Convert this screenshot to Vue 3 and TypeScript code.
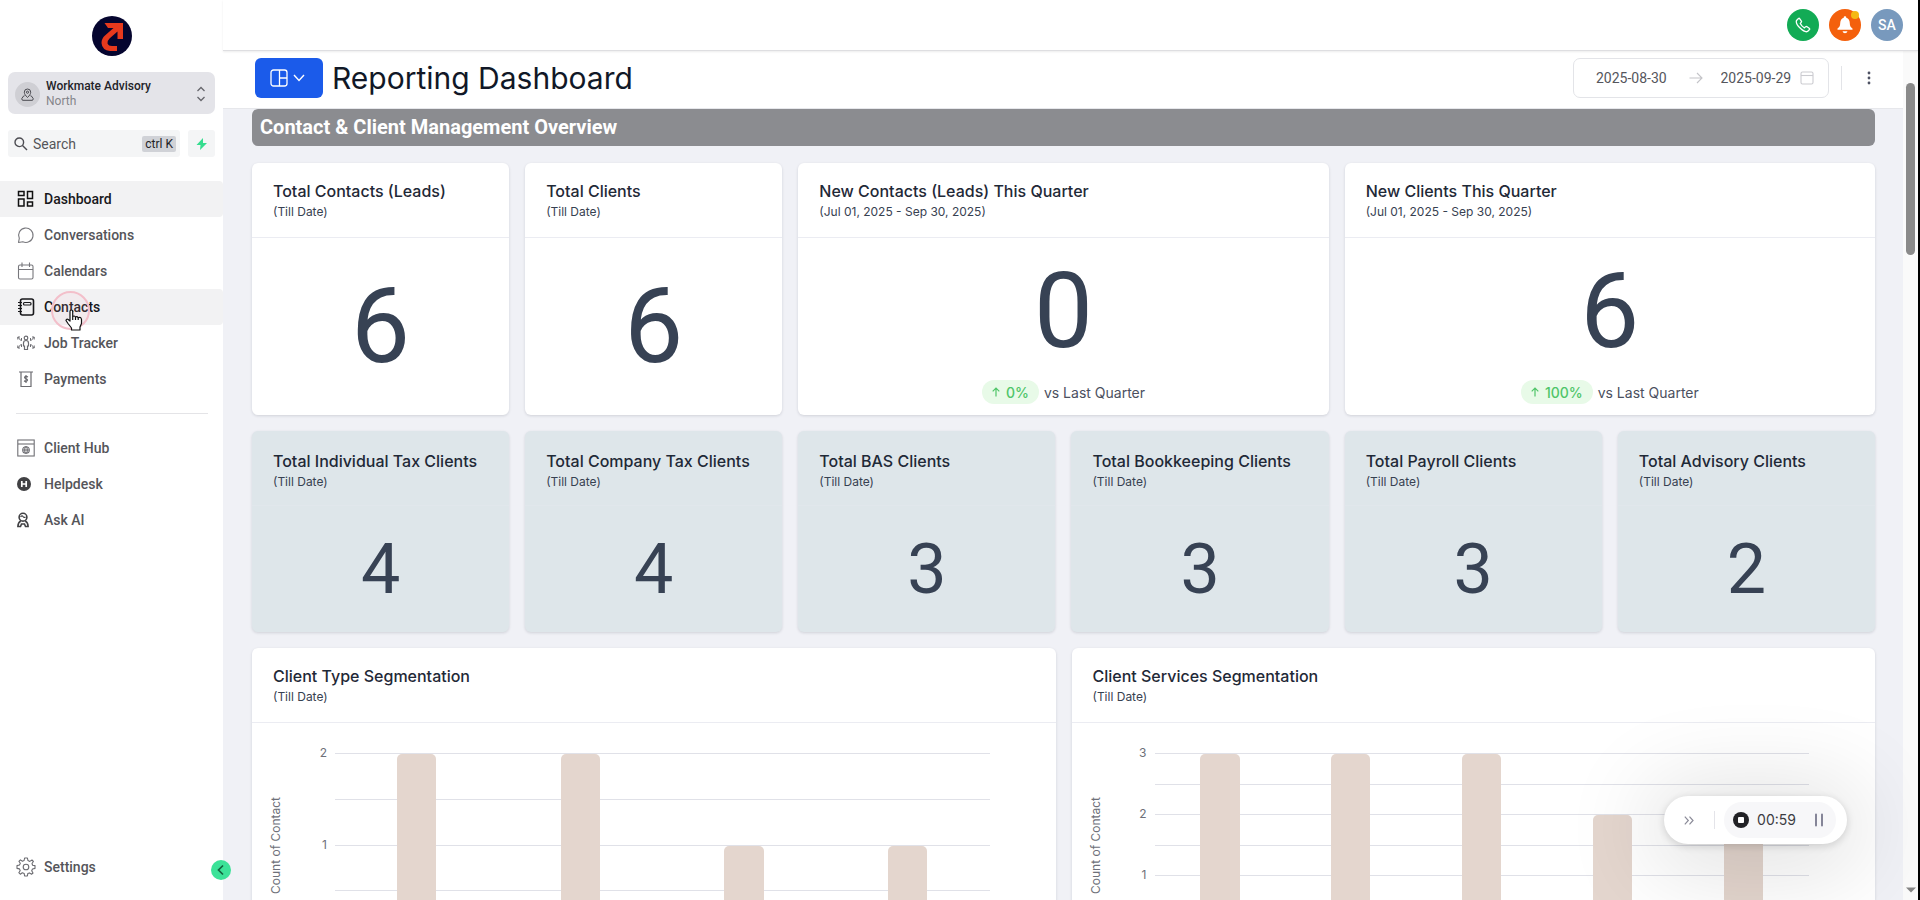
<script setup lang="ts">
import { ref } from 'vue'

interface NavItem { id: string; label: string; active?: boolean }
interface Stat { title: string; period: string; value: number; wide?: boolean; change?: string }
interface Tick { value: number; label: string }
interface Chart { id: string; title: string; max: number; ticks: Tick[]; bars: number[]; barWidth: number }

const search = ref('')
const startDate = ref('2025-08-30')
const endDate = ref('2025-09-29')

const primaryNav: NavItem[] = [
  { id: 'dashboard', label: 'Dashboard', active: true },
  { id: 'conversations', label: 'Conversations' },
  { id: 'calendars', label: 'Calendars' },
  { id: 'contacts', label: 'Contacts', active: true },
  { id: 'jobs', label: 'Job Tracker' },
  { id: 'payments', label: 'Payments' },
]
const secondaryNav: NavItem[] = [
  { id: 'hub', label: 'Client Hub' },
  { id: 'helpdesk', label: 'Helpdesk' },
  { id: 'ask', label: 'Ask AI' },
]

const tillDate = '(Till Date)'
const quarter = '(Jul 01, 2025 - Sep 30, 2025)'

const overview: Stat[] = [
  { title: 'Total Contacts (Leads)', period: tillDate, value: 6 },
  { title: 'Total Clients', period: tillDate, value: 6 },
  { title: 'New Contacts (Leads) This Quarter', period: quarter, value: 0, wide: true, change: '0%' },
  { title: 'New Clients This Quarter', period: quarter, value: 6, wide: true, change: '100%' },
]
const services: Stat[] = [
  { title: 'Total Individual Tax Clients', period: tillDate, value: 4 },
  { title: 'Total Company Tax Clients', period: tillDate, value: 4 },
  { title: 'Total BAS Clients', period: tillDate, value: 3 },
  { title: 'Total Bookkeeping Clients', period: tillDate, value: 3 },
  { title: 'Total Payroll Clients', period: tillDate, value: 3 },
  { title: 'Total Advisory Clients', period: tillDate, value: 2 },
]

// Grid lines every half unit; only whole units above the baseline carry a label.
function halfSteps(max: number): Tick[] {
  return Array.from({ length: max * 2 + 1 }, (_, i) => {
    const value = i / 2
    return { value, label: value > 0 && Number.isInteger(value) ? String(value) : '' }
  })
}

const charts: Chart[] = [
  { id: 'type', title: 'Client Type Segmentation', max: 2, ticks: halfSteps(2), bars: [2, 2, 1, 1], barWidth: 24 },
  { id: 'services', title: 'Client Services Segmentation', max: 3, ticks: halfSteps(3), bars: [3, 3, 3, 2, 2], barWidth: 30 },
]

const percent = (value: number, max: number) => `${(value / max) * 100}%`
</script>

<template>
  <div class="app">
    <aside class="sidebar">
      <a class="logo" href="#" aria-label="Home">
        <svg width="40" height="40" viewBox="0 0 40 40">
          <circle cx="20" cy="20" r="20" fill="#05052f" />
          <path d="M12.500 7H31V23H25.500V15.500L17.500 22.500Q15 25 15.500 27.500Q16.500 30 20 30H25V35H18Q10 34 9.500 27Q9.500 22.500 13 19.500L21.500 12H16Z" fill="#e8391d" />
        </svg>
      </a>

      <button class="location" type="button">
        <span class="location-pin">
          <svg width="13" height="13" viewBox="0 0 13 13" fill="none" stroke="#4a4a50" stroke-width="1">
            <path d="M6.500 9.500C4.500 7.500 3.300 6 3.300 4.200A3.200 3.200 0 0 1 9.700 4.200C9.700 6 8.500 7.500 6.500 9.500Z" />
            <circle cx="6.500" cy="4.200" r="1.100" />
            <path d="M3.500 7.800H2.800L.8 10.500Q.6 12.300 2 12.300H11Q12.400 12.300 12.200 10.500L10.200 7.800H9.500" />
          </svg>
        </span>
        <span class="location-text">
          <strong>Workmate Advisory</strong>
          <span>North</span>
        </span>
        <svg width="10" height="16" viewBox="0 0 10 16" fill="none" stroke="#66666c" stroke-width="1.300">
          <path d="M1.500 5 5 1.500 8.500 5M1.500 11 5 14.500 8.500 11" />
        </svg>
      </button>

      <div class="search-row">
        <label class="search">
          <svg width="14" height="14" viewBox="0 0 14 14" fill="none" stroke="#4c4c52" stroke-width="1.400">
            <circle cx="5.300" cy="5.300" r="4.300" /><path d="M8.500 8.500 13 13" />
          </svg>
          <input v-model="search" type="text" placeholder="Search" aria-label="Search">
          <kbd>ctrl K</kbd>
        </label>
        <button class="bolt" type="button" aria-label="Quick actions">
          <svg width="12" height="12" viewBox="0 0 12 12"><path d="M7 0 .5 7H4.500L4 12 11 5H7Z" fill="#35dd8f" /></svg>
        </button>
      </div>

      <nav class="nav">
        <a v-for="item in primaryNav" :key="item.id" href="#" :class="{ active: item.active }">
          <span class="nav-icon">
            <svg v-if="item.id === 'dashboard'" width="18" height="18" viewBox="0 0 18 18" fill="none" stroke="#111" stroke-width="1.500">
              <rect x="1.500" y="1.500" width="5.500" height="4" /><rect x="10.500" y="1.500" width="5" height="7" /><rect x="1.500" y="9" width="5.500" height="7" /><rect x="10.500" y="12" width="5" height="4" />
            </svg>
            <svg v-else-if="item.id === 'conversations'" width="18" height="18" viewBox="0 0 18 18" fill="none" stroke="#77777c" stroke-width="1.100">
              <path d="M1.500 16.500 2.300 12.300A7.200 7.200 0 1 1 5.800 15.800Z" stroke-linejoin="round" />
            </svg>
            <svg v-else-if="item.id === 'calendars'" width="18" height="18" viewBox="0 0 18 18" fill="none" stroke="#77777c" stroke-width="1.100">
              <rect x="1.500" y="3" width="14.500" height="14" rx="1.500" /><path d="M1.500 7.500H16M5 .5V5M12.500.5V5" />
            </svg>
            <svg v-else-if="item.id === 'contacts'" width="18" height="18" viewBox="0 0 18 18" fill="none" stroke="#18181b" stroke-width="1.600">
              <rect x="3.500" y="1" width="13" height="16" rx="2" /><rect x="6.500" y="4.500" width="7.500" height="2.500" rx="1" stroke-width="1.200" /><path d="M1 4.500H5M1 7.500H5M1 10.500H5M1 13.500H5" stroke-width="1.200" />
            </svg>
            <svg v-else-if="item.id === 'jobs'" width="18" height="18" viewBox="0 0 18 18" fill="none" stroke="#6b6b70" stroke-width="1.200">
              <circle cx="9" cy="4" r="1.800" /><path d="M7.500 15.500V12H6.500V9Q6.500 6.500 9 6.500T11.500 9V12H10.500V15.500Z" />
              <path d="M3 3H.8V5.500M.8 3 3.800 6.500H4.500V4M15 3H17.200V5.500M17.200 3 14.200 6.500H13.500V4M.8 11.500V14H3M.8 14 3.800 10.500H4.500V13M17.200 11.500V14H15M17.200 14 14.200 10.500H13.500V13" stroke-width="1" />
            </svg>
            <svg v-else width="18" height="18" viewBox="0 0 18 18" fill="none" stroke="#6b6b70" stroke-width="1.200">
              <path d="M2 2H16M4 2V16.500H14V2" /><path d="M11 7Q9 5.800 7.700 6.900C6.700 8.800 11.200 8.400 10.500 10.500Q9.500 12 7 10.900M9 5V13" />
            </svg>
          </span>
          <span>{{ item.label }}</span>
        </a>
      </nav>
      <hr class="divider">
      <nav class="nav">
        <a v-for="item in secondaryNav" :key="item.id" href="#">
          <span class="nav-icon">
            <svg v-if="item.id === 'hub'" width="18" height="18" viewBox="0 0 18 18" fill="none" stroke="#6f6f74" stroke-width="1.100">
              <rect x=".8" y="1" width="16.400" height="16" /><path d="M1 5H17" /><circle cx="9" cy="11" r="3.300" /><ellipse cx="9" cy="11" rx="1.300" ry="3.300" /><path d="M5.700 11H12.300" />
            </svg>
            <svg v-else-if="item.id === 'helpdesk'" width="18" height="18" viewBox="0 0 18 18">
              <circle cx="7" cy="9" r="7" fill="#414144" /><path d="M4.800 6V12M9.200 6V12M4.800 9H9.200" stroke="#fff" stroke-width="1.700" />
            </svg>
            <svg v-else width="18" height="18" viewBox="0 0 18 18" fill="none" stroke="#414144" stroke-width="1.600">
              <circle cx="6" cy="6.200" r="3.900" /><path d="M3.500 6Q5 4 6 5.500T8.500 6" stroke-width="1.200" /><path d="M3.800 10Q.9 11.500.9 15.500H3.500L4.500 13H7.500L8.500 15.500H11.100Q11.100 11.500 8.200 10" />
            </svg>
          </span>
          <span>{{ item.label }}</span>
        </a>
      </nav>

      <a class="settings" href="#">
        <span class="nav-icon">
          <svg width="20" height="20" viewBox="0 0 20 20" fill="none" stroke="#6b6b70" stroke-width="1.100" stroke-linejoin="round">
            <circle cx="10" cy="10" r="2.800" />
            <path d="M8.600 1H11.400L12 3.600 13.800 4.400 16 3 17.400 4.500 16 6.500 16.600 8.200 19 8.600V11.400L16.500 12 15.700 13.800 17 16 15.500 17.200 13.500 15.900 11.800 16.600 11.400 19H8.600L8.200 16.600 6.300 15.800 4.300 17.200 2.800 15.700 4.200 13.700 3.500 11.900 1 11.400V8.600L3.500 8 4.300 6.300 2.900 4.300 4.400 2.900 6.400 4.200 8.100 3.500Z" />
          </svg>
        </span>
        <span>Settings</span>
      </a>

      <button class="collapse" type="button" aria-label="Collapse sidebar">
        <svg width="10" height="12" viewBox="0 0 10 12" fill="none" stroke="#14633f" stroke-width="1.700"><path d="M7 1.500 2.500 6 7 10.500" /></svg>
      </button>

      <span class="pointer" aria-hidden="true">
        <span class="halo"></span>
        <svg width="18" height="22" viewBox="0 0 18 22" fill="#fff" stroke="#111" stroke-width="1.200" stroke-linejoin="round">
          <path d="M5 12V2.500Q5 1 6.300 1T7.700 2.500V7.500Q9.300 6.300 10.500 8 12 7 13.200 8.700 16 7.500 16.500 10.500V14.500L15 18V21H6.500V19L3 14.500 1 11.500Q1.500 9.500 3.200 10.500Z" />
          <path d="M7.700 7.500V11M10.500 8V11M13.200 8.700V11" />
        </svg>
      </span>
    </aside>

    <div class="workspace">
      <header class="topbar">
        <button class="round call" type="button" aria-label="Call">
          <svg width="16" height="16" viewBox="0 0 16 16" fill="none" stroke="#fff" stroke-width="1.300" stroke-linejoin="round">
            <path d="M1.500 3.500 3.500 1.500Q4.200 1 4.800 1.800L6.500 4.300Q6.800 5 5.300 6.500 6.500 9.300 9.500 10.800 11 9.200 11.700 9.500L14.200 11.200Q15 11.900 14.500 12.500L12.500 14.500C9 16 0 7.500 1.500 3.500Z" />
          </svg>
        </button>
        <button class="round bell" type="button" aria-label="Notifications">
          <svg width="16" height="18" viewBox="0 0 16 18" fill="#fff">
            <path d="M8 .3A1.300 1.300 0 0 1 9.300 1.700Q12.800 3 12.800 7.300 12.800 11 15.500 12.500V13.800H.5V12.500Q3.200 11 3.200 7.300 3.200 3 6.700 1.700A1.300 1.300 0 0 1 8 .3ZM5.500 15.300H10.500Q10 17.300 8 17.300T5.500 15.300Z" />
          </svg>
          <span class="badge"></span>
        </button>
        <button class="round avatar" type="button">SA</button>
      </header>

      <div class="body">
        <main class="page">
          <div class="toolbar">
            <button class="switcher" type="button" aria-label="Switch dashboard">
              <svg width="18" height="18" viewBox="0 0 18 18" fill="none" stroke="#fff" stroke-width="1.300">
                <rect x="1" y="1" width="16" height="16" rx="2.500" /><path d="M9.500 1V17M9.500 9H17" />
              </svg>
              <svg width="12" height="8" viewBox="0 0 12 8" fill="none" stroke="#fff" stroke-width="1.400"><path d="M1 1 6 6.500 11 1" /></svg>
            </button>
            <h1>Reporting Dashboard</h1>
            <div class="dates">
              <input v-model="startDate" type="text" aria-label="Start date">
              <svg width="14" height="12" viewBox="0 0 14 12" fill="none" stroke="#c4c4c8" stroke-width="1.100"><path d="M.5 6H13M8 1 13 6 8 11" /></svg>
              <input v-model="endDate" type="text" aria-label="End date">
              <svg width="14" height="14" viewBox="0 0 14 14" fill="none" stroke="#cbcbd0" stroke-width="1.100"><rect x="1" y="1" width="12" height="12" rx="1.500" /><path d="M1 4.500H13" /></svg>
            </div>
            <span class="rule"></span>
            <button class="more" type="button" aria-label="More options">
              <svg width="4" height="14" viewBox="0 0 4 14" fill="#4e5263"><circle cx="2" cy="2" r="1.400" /><circle cx="2" cy="7" r="1.400" /><circle cx="2" cy="12" r="1.400" /></svg>
            </button>
          </div>

          <div class="content">
            <h2 class="banner">Contact &amp; Client Management Overview</h2>

            <section class="grid overview">
              <article v-for="stat in overview" :key="stat.title" class="card" :class="{ wide: stat.wide }">
                <header class="card-head">
                  <h3>{{ stat.title }}</h3>
                  <p>{{ stat.period }}</p>
                </header>
                <div class="figure">{{ stat.value }}</div>
                <div v-if="stat.change" class="trend">
                  <span class="pill">
                    <svg width="8" height="10" viewBox="0 0 8 10" fill="none" stroke="currentColor" stroke-width="1.200"><path d="M4 9.500V1M.7 4.300 4 1 7.300 4.300" /></svg>
                    {{ stat.change }}
                  </span>
                  <span>vs Last Quarter</span>
                </div>
              </article>
            </section>

            <section class="grid services">
              <article v-for="stat in services" :key="stat.title" class="card tinted">
                <header class="card-head">
                  <h3>{{ stat.title }}</h3>
                  <p>{{ stat.period }}</p>
                </header>
                <div class="figure">{{ stat.value }}</div>
              </article>
            </section>

            <section class="grid charts">
              <article v-for="chart in charts" :key="chart.id" class="card chart-card">
                <header class="card-head">
                  <h3>{{ chart.title }}</h3>
                  <p>{{ tillDate }}</p>
                </header>
                <div class="chart">
                  <span class="axis-title">Count of Contact</span>
                  <div class="plot">
                    <div v-for="tick in chart.ticks" :key="tick.value" class="gridline" :style="{ bottom: percent(tick.value, chart.max) }">
                      <span v-if="tick.label">{{ tick.label }}</span>
                    </div>
                    <div class="bars">
                      <div v-for="(bar, i) in chart.bars" :key="i" class="slot">
                        <div class="bar" :style="{ height: percent(bar, chart.max), width: chart.barWidth + '%' }"></div>
                      </div>
                    </div>
                  </div>
                </div>
              </article>
            </section>
          </div>
        </main>

        <div class="scrollbar" aria-hidden="true">
          <span class="thumb"></span>
          <svg width="10" height="6" viewBox="0 0 10 6"><path d="M0 .5H10L5 5.500Z" fill="#858585" /></svg>
        </div>
      </div>
    </div>

    <div class="recorder">
      <button class="expand" type="button" aria-label="Hide recorder">
        <svg width="10" height="9" viewBox="0 0 10 9" fill="none" stroke="#8b8b98" stroke-width="1.200"><path d="M.8.7 4.300 4.500.8 8.300M5.500.7 9 4.500 5.500 8.300" /></svg>
      </button>
      <span class="rec-rule"></span>
      <div class="rec-controls">
        <button type="button" aria-label="Stop recording">
          <svg width="16" height="16" viewBox="0 0 16 16"><circle cx="8" cy="8" r="8" fill="#222226" /><rect x="5" y="5" width="6" height="6" rx="1" fill="#fff" /></svg>
        </button>
        <time>00:59</time>
        <button type="button" aria-label="Pause recording">
          <svg width="10" height="14" viewBox="0 0 10 14" stroke="#858598" stroke-width="2" stroke-linecap="round"><path d="M2 1.500V12.500M8 1.500V12.500" /></svg>
        </button>
      </div>
    </div>
  </div>
</template>

<style>
body { overflow: hidden; }
</style>

<style scoped>
* { box-sizing: border-box; }
h1, h2, h3, p { margin: 0; }
button { border: 0; padding: 0; background: none; font: inherit; color: inherit; cursor: pointer; }
input { border: 0; outline: 0; padding: 0; background: none; font: inherit; color: inherit; min-width: 0; }
a { color: inherit; text-decoration: none; }
svg { display: block; flex: none; }

.app {
  display: flex;
  height: 100vh;
  overflow: hidden;
  border-right: 2px solid #000;
  background: #fff;
  font-family: Inter, "Liberation Sans", sans-serif;
  color: #1f2937;
}

.sidebar {
  position: relative;
  flex: none;
  display: flex;
  flex-direction: column;
  width: 223px;
  background: #fff;
  font-family: Roboto, "Liberation Sans", sans-serif;
}
.logo { align-self: center; margin-top: 16px; }
.location {
  display: flex;
  align-items: center;
  gap: 6px;
  height: 42px;
  margin: 16px 8px 0;
  padding: 2px 9px 0 7px;
  border-radius: 7px;
  background: #e4e4e9;
  text-align: left;
}
.location-pin {
  display: grid;
  place-items: center;
  width: 25px;
  height: 25px;
  border-radius: 50%;
  background: #cfcfd4;
}
.location-text { flex: 1; display: flex; flex-direction: column; font-size: 12px; line-height: 15px; color: #85858a; }
.location-text strong { font-weight: 500; color: #232328; }
.search-row { display: flex; gap: 8px; margin: 16px 8px 0; }
.search {
  flex: 1;
  display: flex;
  align-items: center;
  gap: 5px;
  height: 27px;
  padding: 0 4px 0 6px;
  border-radius: 3px;
  background: #f4f5f6;
}
.search input { flex: 1; width: 0; font-size: 14px; color: #55555a; }
.search input::placeholder { color: #55555a; opacity: 1; }
kbd {
  padding: 0 3px;
  border-radius: 2px;
  background: #d0d2d7;
  font-family: inherit;
  font-size: 12px;
  line-height: 16px;
  color: #222226;
}
.bolt { display: grid; place-items: center; width: 27px; border-radius: 3px; background: #f4f5f6; }

.nav { display: flex; flex-direction: column; }
.search-row + .nav { margin-top: 24px; }
.nav a, .settings {
  display: flex;
  align-items: center;
  gap: 9px;
  height: 36px;
  padding-left: 16px;
  border-radius: 0 4px 4px 0;
  font-size: 14px;
  font-weight: 500;
  color: #55555a;
}
.nav a.active { background: #f2f2f3; color: #18181b; }
.nav-icon { display: grid; place-items: center; width: 19px; height: 20px; }
.divider { width: 192px; height: 1px; margin: 16px auto; border: 0; background: #e4e4e7; }
.settings { margin-top: auto; margin-bottom: 15px; }
.collapse {
  position: absolute;
  right: -8px;
  bottom: 20px;
  z-index: 2;
  display: grid;
  place-items: center;
  width: 20px;
  height: 20px;
  border-radius: 50%;
  background: #3ce298;
}
.pointer { position: absolute; left: 65px; top: 309px; pointer-events: none; }
.pointer svg { position: relative; }
.halo {
  position: absolute;
  left: -14px;
  top: -18px;
  width: 39px;
  height: 39px;
  border: 2px solid #f3bfca;
  border-radius: 50%;
  background: rgba(243, 191, 202, 0.12);
}

.workspace { flex: 1; min-width: 0; display: flex; flex-direction: column; }
.topbar {
  position: relative;
  z-index: 1;
  flex: none;
  display: flex;
  align-items: center;
  justify-content: flex-end;
  gap: 10px;
  height: 51px;
  padding-right: 15px;
  border-bottom: 1px solid #dedee1;
  box-shadow: 0 1px 2px rgba(0, 0, 0, 0.08);
  background: #fff;
}
.round { position: relative; display: grid; place-items: center; width: 32px; height: 32px; border-radius: 50%; color: #fff; }
.call { background: #12ab55; }
.bell { background: #f4600c; }
.avatar { background: #7899bd; font-family: Roboto, sans-serif; font-size: 14px; font-weight: 500; }
.badge { position: absolute; top: 2px; right: 2px; width: 8px; height: 8px; border-radius: 50%; background: #f5b915; }

.body { flex: 1; min-height: 0; display: flex; }
.page { flex: 1; min-width: 0; overflow: hidden; background: #f0f1f6; }
.toolbar {
  display: flex;
  align-items: center;
  height: 58px;
  padding: 0 24px 3px 32px;
  border-bottom: 1px solid #e6e7eb;
  background: #fff;
}
.switcher {
  display: flex;
  align-items: center;
  justify-content: center;
  gap: 5px;
  width: 68px;
  height: 40px;
  padding-right: 3px;
  border-radius: 6px;
  background: #1b5bea;
}
h1 { margin-left: 9px; font-size: 30px; line-height: 40px; font-weight: 400; color: #111827; }
.dates {
  display: flex;
  align-items: center;
  width: 256px;
  height: 40px;
  margin-left: auto;
  padding: 0 14px 0 22px;
  border: 1px solid #e3e4e8;
  border-radius: 7px;
  font-family: Roboto, sans-serif;
  font-size: 14px;
  color: #55565c;
}
.dates input { width: 72px; }
.dates svg:first-of-type { margin: 0 18px 0 21px; }
.dates svg:last-child { margin-left: 8px; }
.rule { width: 1px; height: 24px; margin-left: 12px; background: #e3e4e8; }
.more { display: grid; place-items: center; width: 20px; height: 32px; margin-left: 17px; }

.content { padding: 0 28px 0 29px; }
.banner {
  height: 37px;
  padding: 0 8px;
  border-radius: 6px;
  background: #8b8c90;
  font-family: Roboto, sans-serif;
  font-size: 20px;
  font-weight: 700;
  line-height: 36px;
  color: #fff;
}
.grid { display: grid; grid-template-columns: repeat(6, 1fr); gap: 16px; margin-top: 16px; }
.banner + .grid { margin-top: 17px; }
.card {
  display: flex;
  flex-direction: column;
  border-radius: 6px;
  background: #fff;
  box-shadow: 0 1px 3px rgba(16, 24, 40, 0.14);
}
.overview .card { height: 252px; }
.services .card { height: 201px; }
.wide { grid-column: span 2; }
.chart-card { grid-column: span 3; }
.tinted { background: #dee6ea; }
.card-head { flex: none; height: 75px; padding: 16px 21px 0; border-bottom: 1px solid #ebecf2; }
.tinted .card-head { padding-top: 18px; border-color: #e1e7ec; }
h3 { font-size: 16px; font-weight: 500; line-height: 24px; color: #1f2937; white-space: nowrap; }
.card-head p { margin-top: 1px; font-size: 12px; line-height: 16px; color: #374151; }
.figure {
  flex: 1;
  display: grid;
  place-items: center;
  font-family: Roboto, sans-serif;
  font-size: 105px;
  line-height: 1;
  color: #374254;
}
.wide .figure { padding-top: 4px; }
.tinted .figure { font-size: 70px; }
.trend {
  display: flex;
  align-items: center;
  justify-content: center;
  gap: 5px;
  height: 24px;
  margin-bottom: 11px;
  font-size: 14px;
  color: #4b5060;
}
.pill {
  display: flex;
  align-items: center;
  gap: 6px;
  height: 24px;
  padding: 0 10px;
  border-radius: 12px;
  background: #e8fae8;
  font-weight: 500;
  color: #4fc568;
}

.chart { display: flex; padding: 31px 66px 40px 14px; }
.axis-title {
  width: 20px;
  height: 182px;
  margin-right: 49px;
  writing-mode: vertical-rl;
  transform: rotate(180deg);
  text-align: center;
  font-size: 12px;
  line-height: 20px;
  color: #6e7079;
}
.plot { position: relative; flex: 1; height: 183px; }
.gridline { position: absolute; left: 0; right: 0; height: 1px; background: #e0e1e8; }
.gridline span { position: absolute; right: 100%; top: -8px; margin-right: 8px; font-size: 12px; line-height: 16px; color: #6e7079; }
.bars { position: relative; display: flex; height: 100%; }
.slot { flex: 1; display: flex; align-items: flex-end; justify-content: center; }
.bar { border-radius: 5px 5px 0 0; background: #e4d6ce; }

.scrollbar {
  flex: none;
  display: flex;
  flex-direction: column;
  align-items: center;
  justify-content: space-between;
  width: 15px;
  padding: 32px 0 7px;
  background: #fafafa;
}
.thumb { width: 9px; height: 172px; border-radius: 5px; background: #8a8a8a; }

.recorder {
  position: fixed;
  right: 73px;
  bottom: 56px;
  z-index: 3;
  display: flex;
  align-items: center;
  height: 48px;
  padding: 0 11px 0 20px;
  border-radius: 24px;
  background: #fff;
  box-shadow: 0 2px 10px rgba(0, 0, 0, 0.16), 0 8px 90px 20px rgba(0, 0, 0, 0.12);
}
.rec-rule { width: 1px; height: 18px; margin: 0 9px 0 20px; background: #e4e4e9; }
.rec-controls {
  display: flex;
  align-items: center;
  height: 36px;
  padding: 0 12px 0 9px;
  border-radius: 18px;
  background: #f7f7f9;
}
.rec-controls time { margin: 0 18px 0 8px; font-size: 14px; line-height: 20px; color: #3c3c42; }
</style>
